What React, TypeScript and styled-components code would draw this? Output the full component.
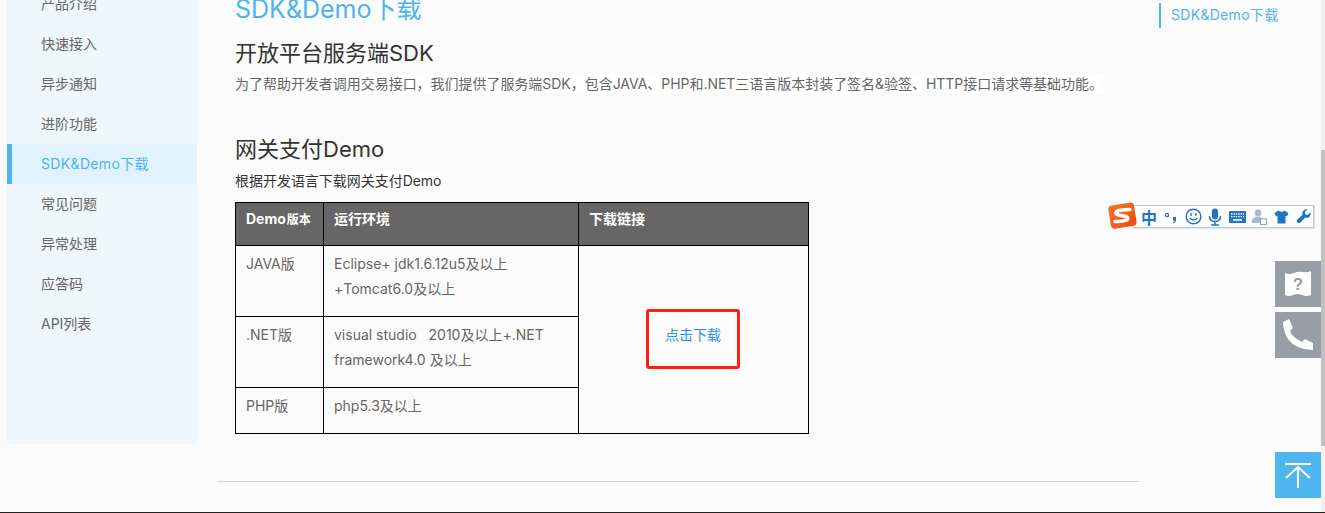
import styled, { createGlobalStyle } from "styled-components";

const GlobalStyle = createGlobalStyle`
  html, body {
    margin: 0;
    padding: 0;
    background: #fbfbfb;
  }
  body {
    font-family: "Inter", "Noto Sans CJK SC", sans-serif;
    overflow: hidden;
  }
`;

// ── Layout ────────────────────────────────────────────────

const Page = styled.div`
  position: relative;
  height: 513px;
  overflow: hidden;
  box-sizing: border-box;
  border-bottom: 1px solid #222;
  display: flex;
  flex-direction: column;
`;

const Body = styled.div`
  display: flex;
  align-items: flex-start;
  padding-left: 7px;
`;

// ── Sidebar ───────────────────────────────────────────────

const Sidebar = styled.ul`
  list-style: none;
  width: 190px;
  height: 460px;
  margin: -16px 0 0;
  padding: 0;
  background: #eef7fb;
  flex-shrink: 0;
`;

const SideItem = styled.li<{ $active?: boolean }>`
  height: 40px;
  line-height: 40px;
  box-sizing: border-box;
  padding-left: ${(p) => (p.$active ? "29px" : "34px")};
  font-size: 14px;
  letter-spacing: ${(p) => (p.$active ? "0.35px" : "0")};
  color: ${(p) => (p.$active ? "#4fb3ef" : "#666")};
  background: ${(p) => (p.$active ? "#e0f2fe" : "transparent")};
  border-left: ${(p) => (p.$active ? "5px solid #4fb5f0" : "none")};
`;

// ── Main column ───────────────────────────────────────────

const Main = styled.main`
  margin: -9px 0 0 38px;
  display: flex;
  flex-direction: column;
  align-items: flex-start;
  width: 880px;
`;

const PageTitle = styled.h1`
  margin: 0;
  height: 37px;
  font-size: 25px;
  line-height: 37px;
  font-weight: 400;
  color: #4fb3ef;
`;

const SectionTitle = styled.h2<{ $top: number }>`
  margin: ${(p) => p.$top}px 0 0;
  height: 32px;
  font-size: 22px;
  line-height: 32px;
  font-weight: 400;
  color: #333;
`;

const Lead = styled.p<{ $top: number; $dark?: boolean }>`
  margin: ${(p) => p.$top}px 0 0;
  font-size: 14px;
  line-height: 20px;
  letter-spacing: -0.03px;
  color: ${(p) => (p.$dark ? "#333" : "#666")};
  background: #fff;
  white-space: nowrap;
`;

// ── Table ─────────────────────────────────────────────────

const DemoTable = styled.table`
  margin-top: 11px;
  border-collapse: collapse;
  table-layout: fixed;
  width: 573px;
  font-size: 14px;
  color: #666;
`;

const HeadCell = styled.th<{ $width: number }>`
  width: ${(p) => p.$width}px;
  height: 43px;
  padding: 0 10px 12px;
  box-sizing: border-box;
  border: 1px solid #000;
  background: #666;
  color: #fff;
  font-size: 14px;
  font-weight: 700;
  text-align: left;
`;

const Small = styled.span`
  font-size: 12px;
  margin-left: 1px;
`;

const Cell = styled.td<{ $height: number }>`
  height: ${(p) => p.$height}px;
  padding: 5px 10px 0;
  box-sizing: border-box;
  border: 1px solid #000;
  line-height: 25px;
  vertical-align: top;
`;

const LinkCell = styled.td`
  border: 1px solid #000;
  padding: 0;
  vertical-align: middle;
`;

const DownloadBox = styled.div`
  width: 94px;
  height: 60px;
  margin: -2px 0 0 67px;
  box-sizing: border-box;
  border: 3px solid #ff2015;
  border-radius: 3px;
  display: flex;
  align-items: center;
  justify-content: center;
  font-size: 14px;
  color: #1e96f0;
  padding-bottom: 10px;
`;

const FooterRule = styled.hr`
  width: 922px;
  height: 1px;
  margin: 37px 0 0 217px;
  border: 0;
  background: #d2d2d2;
`;

// ── Overlays ──────────────────────────────────────────────

const AnchorNav = styled.div`
  position: absolute;
  top: 3px;
  left: 1159px;
  height: 25px;
  line-height: 24px;
  padding-left: 10px;
  border-left: 2px solid #4fb5f0;
  font-size: 14px;
  letter-spacing: 0.3px;
  color: #4fb3ef;
`;

const ImeBar = styled.div`
  position: absolute;
  left: 1108px;
  top: 202px;
  width: 206px;
  height: 27px;
`;

const ImeTray = styled.div`
  position: absolute;
  left: 24px;
  right: 0;
  top: 3px;
  height: 23px;
  box-sizing: border-box;
  background: #fff;
  border: 1px solid #b8c9dd;
  box-shadow: 1px 1px 1px rgba(0, 0, 0, 0.08);
  display: flex;
  align-items: center;
  padding-left: 5px;
`;

const ImeLogo = styled.svg`
  position: absolute;
  left: 0;
  top: 0;
  z-index: 1;
`;

const ImeSlot = styled.span`
  width: 22px;
  flex-shrink: 0;
  display: flex;
  align-items: center;
  justify-content: center;
  font-size: 16px;
  font-weight: 700;
  color: #1f74c4;
`;

const FloatButton = styled.div<{ $top: number; $color: string }>`
  position: absolute;
  left: 1275px;
  top: ${(p) => p.$top}px;
  width: 46px;
  height: 46px;
  background: ${(p) => p.$color};
  display: flex;
  align-items: center;
  justify-content: center;
`;

const ScrollTrack = styled.div`
  position: absolute;
  right: 0;
  top: 0;
  bottom: 0;
  width: 4px;
  background: #f1f1f1;
`;

const ScrollThumb = styled.div`
  position: absolute;
  left: 0;
  right: 0;
  top: 150px;
  height: 296px;
  background: #c1c1c1;
`;

const menu = [
  "产品介绍",
  "快速接入",
  "异步通知",
  "进阶功能",
  "SDK&Demo下载",
  "常见问题",
  "异常处理",
  "应答码",
  "API列表",
];

export default function App() {
  return (
    <Page>
      <GlobalStyle />
      <Body>
        <Sidebar>
          {menu.map((m) => (
            <SideItem key={m} $active={m === "SDK&Demo下载"}>
              {m}
            </SideItem>
          ))}
        </Sidebar>
        <Main>
          <PageTitle>SDK&amp;Demo下载</PageTitle>
          <SectionTitle $top={9}>开放平台服务端SDK</SectionTitle>
          <Lead $top={5}>
            为了帮助开发者调用交易接口，我们提供了服务端SDK，包含JAVA、PHP和.NET三语言版本封装了签名&amp;验签、HTTP接口请求等基础功能。
          </Lead>
          <SectionTitle $top={39}>网关支付Demo</SectionTitle>
          <Lead $top={6} $dark>
            根据开发语言下载网关支付Demo
          </Lead>
          <DemoTable>
            <thead>
              <tr>
                <HeadCell $width={88}>
                  Demo<Small>版本</Small>
                </HeadCell>
                <HeadCell $width={255}>运行环境</HeadCell>
                <HeadCell $width={230}>下载链接</HeadCell>
              </tr>
            </thead>
            <tbody>
              <tr>
                <Cell $height={71}>JAVA版</Cell>
                <Cell $height={71}>
                  Eclipse+ jdk1.6.12u5及以上
                  <br />
                  +Tomcat6.0及以上
                </Cell>
                <LinkCell rowSpan={3}>
                  <DownloadBox>点击下载</DownloadBox>
                </LinkCell>
              </tr>
              <tr>
                <Cell $height={71}>.NET版</Cell>
                <Cell $height={71}>
                  visual studio&nbsp;&nbsp; 2010及以上+.NET
                  <br />
                  framework4.0 及以上
                </Cell>
              </tr>
              <tr>
                <Cell $height={46}>PHP版</Cell>
                <Cell $height={46}>php5.3及以上</Cell>
              </tr>
            </tbody>
          </DemoTable>
        </Main>
      </Body>
      <FooterRule />

      <AnchorNav>SDK&amp;Demo下载</AnchorNav>

      <ImeBar>
        <ImeLogo width="30" height="28" viewBox="0 0 30 28">
          <defs>
            <linearGradient id="imeLogoFill" x1="0" y1="0" x2="1" y2="1">
              <stop offset="0" stopColor="#f4761f" />
              <stop offset="1" stopColor="#ee4a17" />
            </linearGradient>
          </defs>
          <rect x="1.5" y="2" width="26" height="23.5" rx="4" fill="url(#imeLogoFill)" transform="rotate(-9 14 14)" />
          <path d="M22 7.5 Q12 7.5 8.5 9.5 Q6.5 12 11 13 L18 14.5 Q21.5 16 18.5 18 Q14 20 7 19.5" fill="none" stroke="#fff" strokeWidth="3.5" strokeLinecap="round" />
        </ImeLogo>
        <ImeTray>
          <ImeSlot>中</ImeSlot>
          <ImeSlot>
            <svg width="18" height="16" viewBox="0 0 18 16">
              <circle cx="5" cy="6" r="1.6" fill="none" stroke="#1f74c4" strokeWidth="1.3" />
              <path d="M11 8 h3 v3 q0 2.5-2.5 3.5 l-.6-1 q1.2-.7 1.3-2 h-1.2z" fill="#1f74c4" />
            </svg>
          </ImeSlot>
          <ImeSlot>
            <svg width="17" height="17" viewBox="0 0 17 17">
              <circle cx="8.5" cy="8.5" r="7.3" fill="none" stroke="#1f74c4" strokeWidth="1.4" />
              <rect x="5.3" y="5" width="1.6" height="3" rx=".8" fill="#1f74c4" />
              <rect x="10.1" y="5" width="1.6" height="3" rx=".8" fill="#1f74c4" />
              <path d="M4.6 10 q3.9 3.8 7.8 0" fill="none" stroke="#1f74c4" strokeWidth="1.4" />
            </svg>
          </ImeSlot>
          <ImeSlot>
            <svg width="14" height="18" viewBox="0 0 14 18">
              <rect x="4" y="0.5" width="6" height="11" rx="3" fill="#1f74c4" />
              <path d="M1.5 8 q0 5.5 5.5 5.5 q5.5 0 5.5-5.5 M7 13.5 v3 M3 17 h8" fill="none" stroke="#1f74c4" strokeWidth="1.5" />
            </svg>
          </ImeSlot>
          <ImeSlot>
            <svg width="17" height="12" viewBox="0 0 17 12">
              <rect x="0" y="0" width="17" height="12" rx="1" fill="#1f74c4" />
              <path d="M2 3 h13 M2 5.6 h13" stroke="#fff" strokeWidth="1.3" strokeDasharray="1.4 1" />
              <path d="M4 9 h9" stroke="#fff" strokeWidth="1.5" />
            </svg>
          </ImeSlot>
          <ImeSlot>
            <svg width="16" height="16" viewBox="0 0 16 16">
              <circle cx="7" cy="4" r="3.4" fill="#a9bccf" />
              <path d="M0.5 14 q0-6.5 6.5-6.5 q3.5 0 5 2.5 l-3 4z" fill="#a9bccf" />
              <rect x="9.5" y="10" width="6" height="5.5" fill="#fff" stroke="#8fa3b8" strokeWidth="1" />
            </svg>
          </ImeSlot>
          <ImeSlot>
            <svg width="15" height="14" viewBox="0 0 15 14">
              <path d="M4.5 0.5 L0.5 3 L2 6.5 L3.5 5.8 V13.5 H11.5 V5.8 L13 6.5 L14.5 3 L10.5 0.5 Q7.5 3 4.5 0.5z" fill="#1f74c4" />
            </svg>
          </ImeSlot>
          <ImeSlot>
            <svg width="15" height="15" viewBox="0 0 16 16">
              <path d="M15.5 3.5 L12 6.5 L10 5.5 L9.5 3 L12.5 0.5 Q8.5 -0.5 7 3 Q6.5 5 7 6 L1.2 11.5 Q0 13 1.5 14.5 Q3 16 4.5 14.5 L10 9 Q12 10 14 8.5 Q16 7 15.5 3.5z" fill="#1f74c4" />
            </svg>
          </ImeSlot>
        </ImeTray>
      </ImeBar>

      <FloatButton $top={261} $color="#989da6">
        <svg width="26" height="26" viewBox="0 0 26 26">
          <path d="M0 2 Q5 4 9 2 T17 1 Q22 2 26 0 V24 Q21 26 17 24 T8 24 Q4 26 0 24z" fill="#fff" />
          <text x="13" y="19" textAnchor="middle" fontSize="17" fontWeight="700" fontFamily="Liberation Sans, sans-serif" fill="#989da6">?</text>
        </svg>
      </FloatButton>
      <FloatButton $top={312} $color="#989da6">
        <svg width="32" height="32" viewBox="0 0 32 32">
          <path d="M1 3 L7 0 L11 9 L8 12 Q10 18 20 23 L23 20 L31 24 V31 Q14 31 6 20 Q1 12 1 3z" fill="#fff" />
        </svg>
      </FloatButton>
      <FloatButton $top={452} $color="#4fb5ee">
        <svg width="28" height="28" viewBox="0 0 28 28" fill="none" stroke="#fff" strokeWidth="2">
          <path d="M1 3 H27 M14 27 V6 M2 17 L14 6 L26 17" />
        </svg>
      </FloatButton>

      <ScrollTrack>
        <ScrollThumb />
      </ScrollTrack>
    </Page>
  );
}
